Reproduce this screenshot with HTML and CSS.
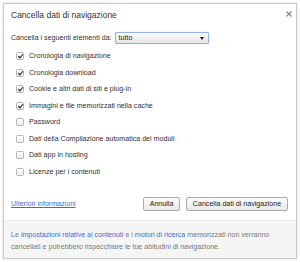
FILE: index.html
```html
<!DOCTYPE html>
<html>
<head>
    <title>Cancella dati di navigazione</title>
    <meta charset="UTF-8">
    <link rel="stylesheet" href="styles.css">
</head>
<body>
    <div class="dialog">
        <h2 class="dialog-title">Cancella dati di navigazione</h2>
        <button class="close-btn" aria-label="Chiudi">
            <svg width="6" height="6" viewBox="0 0 6 6"><path d="M0.5 0.5L5.5 5.5M5.5 0.5L0.5 5.5" stroke="#8a8a8a" stroke-width="1.3"/></svg>
        </button>
        <div class="dialog-body">
            <div class="range-row">
                <label for="range">Cancella i seguenti elementi da:</label>
                <div class="select" id="range">
                    <span>tutto</span>
                    <span class="arrow"></span>
                </div>
            </div>
            <ul class="options">
                <li><span class="check checked"></span>Cronologia di navigazione</li>
                <li><span class="check checked"></span>Cronologia download</li>
                <li><span class="check checked"></span>Cookie e altri dati di siti e plug-in</li>
                <li><span class="check checked"></span>Immagini e file memorizzati nella cache</li>
                <li><span class="check"></span>Password</li>
                <li><span class="check"></span>Dati della Compilazione automatica dei moduli</li>
                <li><span class="check"></span>Dati app in hosting</li>
                <li><span class="check"></span>Licenze per i contenuti</li>
            </ul>
            <div class="actions">
                <a href="#" class="more-link">Ulteriori informazioni</a>
                <div class="buttons">
                    <button class="btn">Annulla</button>
                    <button class="btn">Cancella dati di navigazione</button>
                </div>
            </div>
        </div>
        <div class="dialog-footer">
            Le <a href="#">impostazioni relative ai contenuti</a> e i <a href="#">motori di ricerca</a> memorizzati non verranno<br>
            cancellati e potrebbero rispecchiare le tue abitudini di navigazione.
        </div>
    </div>
</body>
</html>
```

FILE: styles.css
```css
body {
    margin: 0;
    padding: 3px;
    background: #fff;
    font-family: "Liberation Sans", Arial, sans-serif;
    font-size: 7.1px;
    color: #303030;
}

.dialog {
    position: relative;
    width: 292px;
    height: 254px;
    border: 1px solid #c9c9c9;
    box-shadow: 0 0 3px rgba(0, 0, 0, 0.15);
    background: #fff;
    display: flex;
    flex-direction: column;
}

.dialog-title {
    margin: 0;
    padding: 6px 7px 0;
    font-size: 8.5px;
    line-height: 10px;
    font-weight: normal;
    color: #333;
}

.close-btn {
    position: absolute;
    top: 5px;
    right: 2px;
    width: 10px;
    height: 10px;
    padding: 0;
    border: none;
    background: none;
    display: flex;
    align-items: center;
    justify-content: center;
}

.dialog-body {
    padding: 0 7px;
    flex: 1;
}

.range-row {
    margin-top: 12px;
    height: 12px;
    display: flex;
    align-items: center;
    gap: 3px;
}

.select {
    width: 94px;
    height: 12px;
    box-sizing: border-box;
    border: 1px solid #8eb1ea;
    border-radius: 1px;
    background: linear-gradient(#fbfbfb, #e6e6e6);
    box-shadow: 0 0 1px rgba(90, 140, 230, 0.5);
    display: flex;
    align-items: center;
    justify-content: space-between;
    padding: 0 4px 0 3px;
    color: #222;
}

.arrow {
    width: 0;
    height: 0;
    border-left: 2.5px solid transparent;
    border-right: 2.5px solid transparent;
    border-top: 3px solid #111;
}

.options {
    list-style: none;
    margin: 4px 0 0;
    padding: 0;
}

.options li {
    height: 16.5px;
    display: flex;
    align-items: center;
    padding-left: 5px;
}

.check {
    width: 8px;
    height: 8px;
    box-sizing: border-box;
    margin-right: 5px;
    border: 1px solid #b4b4b4;
    border-radius: 1.5px;
    background: linear-gradient(#fdfdfd, #ececec);
    position: relative;
}

.check.checked::after {
    content: '';
    position: absolute;
    left: 2px;
    top: 0px;
    width: 2px;
    height: 4px;
    border-right: 1.3px solid #222;
    border-bottom: 1.3px solid #222;
    transform: rotate(40deg);
}

.actions {
    margin-top: 17px;
    height: 14px;
    display: flex;
    align-items: center;
    justify-content: space-between;
}

.more-link {
    color: #3a6cd6;
    text-decoration: underline;
}

.buttons {
    display: flex;
    gap: 6px;
    padding-right: 1px;
}

.btn {
    height: 14px;
    padding: 0 5px;
    font-family: inherit;
    font-size: 7.1px;
    color: #222;
    border: 1px solid #a8a8a8;
    border-radius: 2px;
    background: linear-gradient(#fcfcfc, #e9e9e9);
}

.buttons .btn:first-child {
    width: 37px;
}

.buttons .btn:last-child {
    width: 102px;
}

.dialog-footer {
    height: 38px;
    box-sizing: border-box;
    padding: 8px 7px 0;
    background: #f5f5f5;
    border-top: 1px solid #e8e8e8;
    line-height: 12px;
    color: #777;
}

.dialog-footer a {
    color: #3a6cd6;
    text-decoration: none;
}
```
